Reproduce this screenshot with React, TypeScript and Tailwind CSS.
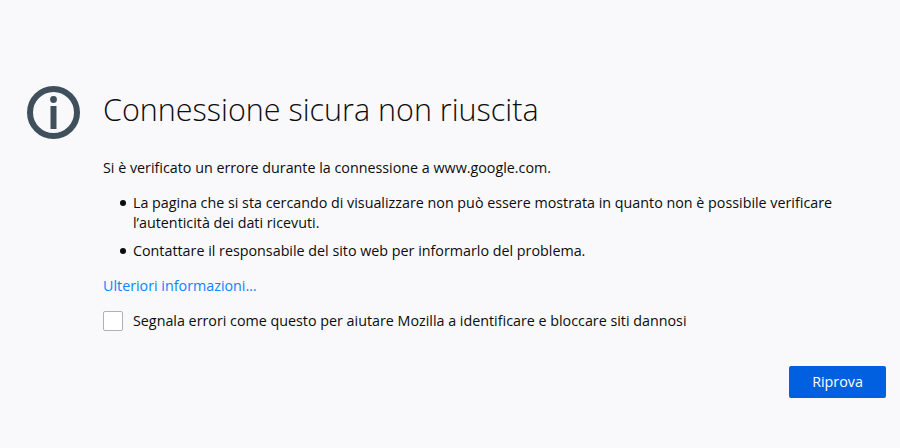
export default function App() {
  const bullets = [
    "La pagina che si sta cercando di visualizzare non può essere mostrata in quanto non è possibile verificare l’autenticità dei dati ricevuti.",
    "Contattare il responsabile del sito web per informarlo del problema.",
  ];

  return (
    <main className="w-[900px] h-[448px] overflow-hidden bg-[#f9f9fb] text-[#0c0c0d] font-['Open_Sans','Noto_Sans',sans-serif] flex">
      <div className="w-[103px] shrink-0 pt-[86px] pl-[27px]">
        <svg width="53" height="53" viewBox="0 0 53 53" fill="none">
          <circle cx="26.5" cy="26.5" r="23.5" stroke="#3f4f5c" strokeWidth="6" />
          <circle cx="26.5" cy="13.5" r="3.4" fill="#3f4f5c" />
          <rect x="23.5" y="20" width="6" height="23" fill="#3f4f5c" />
        </svg>
      </div>
      <div className="flex-1 pr-[14px]">
        <h1 className="mt-[89px] text-[30.5px] leading-[40px] font-light">Connessione sicura non riuscita</h1>
        <p className="mt-[29px] text-[14.3px] leading-[20px]">Si è verificato un errore durante la connessione a www.google.com.</p>
        <ul className="mt-[15px] text-[14.3px] leading-[20px] pr-[40px]">
          {bullets.map((text, i) => (
            <li key={text} className={i > 0 ? "mt-[8px] flex" : "flex"}>
              <span className="w-[6px] h-[6px] mt-[7px] ml-[17px] mr-[7px] rounded-full bg-[#0c0c0d] shrink-0" />
              <span>{text}</span>
            </li>
          ))}
        </ul>
        <a className="block mt-[15px] text-[14.3px] leading-[20px] text-[#0a84ff]">Ulteriori informazioni…</a>
        <label className="mt-[15px] flex items-center gap-[10px] text-[14.3px] leading-[20px]">
          <span className="w-[20px] h-[20px] rounded-[2px] border border-[#b1b1b3] bg-white" />
          Segnala errori come questo per aiutare Mozilla a identificare e bloccare siti dannosi
        </label>
        <div className="mt-[35px] flex justify-end">
          <button className="w-[97px] h-[32px] rounded-[2px] bg-[#0060df] text-white text-[14.3px] font-medium">Riprova</button>
        </div>
      </div>
    </main>
  );
}
